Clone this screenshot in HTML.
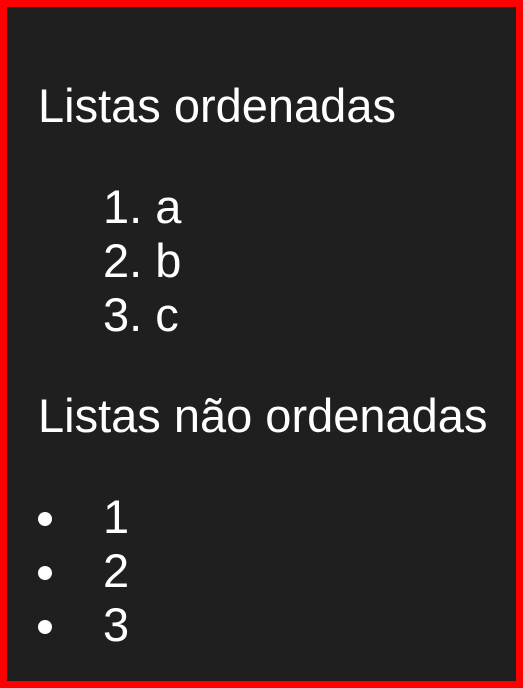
<!DOCTYPE html>
<html><head><style>
html,body{margin:0;padding:0}
body{width:523px;height:688px;background:#1f1f1f;position:relative;overflow:hidden;font-family:"Liberation Sans",Arial,sans-serif;color:#fff;font-size:47px;line-height:54px}
.b{position:absolute;left:0;top:0;width:509px;height:674px;border:7px solid #f00}
.t{position:absolute;white-space:nowrap}
.d{position:absolute;left:38px;width:14px;height:14px;border-radius:50%;background:#fff}
</style></head><body>
<div class="b"></div>
<div class="t" style="left:38px;top:79px">Listas ordenadas</div>
<div class="t" style="left:103px;top:180px">1. a</div>
<div class="t" style="left:103px;top:234px">2. b</div>
<div class="t" style="left:103px;top:288px">3. c</div>
<div class="t" style="left:38px;top:389px">Listas não ordenadas</div>
<div class="d" style="top:512px"></div><div class="t" style="left:103px;top:490px">1</div>
<div class="d" style="top:566px"></div><div class="t" style="left:103px;top:544px">2</div>
<div class="d" style="top:620px"></div><div class="t" style="left:103px;top:598px">3</div>
</body></html>
